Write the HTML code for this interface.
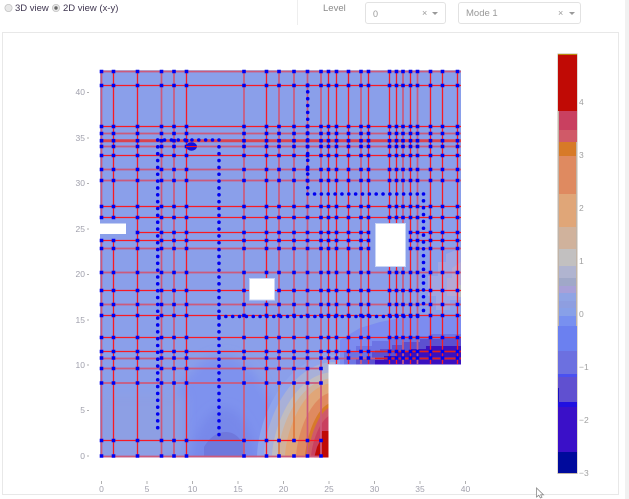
<!DOCTYPE html>
<html>
<head>
<meta charset="utf-8">
<style>
html,body{margin:0;padding:0;background:#fff;width:629px;height:499px;overflow:hidden}
body{position:relative;font-family:"Liberation Sans",sans-serif}
#w{position:absolute;left:0;top:0;width:629px;height:499px;overflow:hidden;filter:blur(0.3px)}
.a{position:absolute}
.sel{position:absolute;top:2px;height:20px;border:1px solid #e2e2e2;border-radius:3px;box-sizing:content-box;background:#fff}
svg{position:absolute;left:0;top:0;display:block}
</style>
</head>
<body>
<div id="w">
<svg width="629" height="499" viewBox="0 0 629 499" xmlns="http://www.w3.org/2000/svg" font-family="Liberation Sans, sans-serif">
<defs>
<clipPath id="dom"><path d="M100 70H461V364.5H328.5V457.5H100Z"/></clipPath>
<filter id="b" x="-30%" y="-30%" width="160%" height="160%"><feGaussianBlur stdDeviation="5"/></filter>
<path id="row" d="M101.5 0h0M113.5 0h0M137.5 0h0M161.5 0h0M174 0h0M186.5 0h0M244 0h0M266.5 0h0M279 0h0M294 0h0M307.5 0h0M321 0h0M328.5 0h0M336.5 0h0M348.5 0h0M361 0h0M368.5 0h0M389.5 0h0M396.5 0h0M403 0h0M410.5 0h0M417.5 0h0M430.5 0h0M442.5 0h0M457.5 0h0" fill="none" stroke="#0000f0" stroke-width="3.6" stroke-linecap="square"/>
<path id="row2" d="M101.5 0h0M113.5 0h0M137.5 0h0M161.5 0h0M174 0h0M186.5 0h0M244 0h0M266.5 0h0M279 0h0M294 0h0M307.5 0h0M321 0h0" fill="none" stroke="#0000f0" stroke-width="3.6" stroke-linecap="square"/>
<path id="row3" d="M137.5 0h0M161.5 0h0M174 0h0M186.5 0h0M244 0h0M266.5 0h0M279 0h0M294 0h0M307.5 0h0M321 0h0M328.5 0h0M336.5 0h0M348.5 0h0M361 0h0M368.5 0h0M410.5 0h0M417.5 0h0M430.5 0h0M442.5 0h0M457.5 0h0" fill="none" stroke="#0000f0" stroke-width="3.6" stroke-linecap="square"/>
</defs>

<!-- panel -->
<rect x="2.5" y="32.5" width="616" height="462" fill="#fff" stroke="#e8e8e8"/>
<rect x="625" y="0" width="4" height="499" fill="#f1f1f1"/>
<rect x="297" y="0" width="1" height="25" fill="#eeeeee"/>

<!-- heatmap -->
<g clip-path="url(#dom)">
<rect x="100" y="70" width="361" height="388" fill="#8a9fea"/>
<path d="M160 475C160 410 190 355 222 355C254 355 284 410 284 475Z" fill="#7e92ee" filter="url(#b)"/>
<rect x="100" y="395" width="85" height="63" fill="#8d9fe4" filter="url(#b)"/>
<path d="M190 475C190 440 205 408 224 408C243 408 258 440 258 475Z" fill="#7788ea" filter="url(#b)"/>
<path d="M204 458V447C208 440 215 432 226 432C236 432 241 440 245 447V458Z" fill="#6f78dc"/>
<!-- right bottom hot corner -->
<path d="M257 458C257 420 285 355 335 355V458Z" fill="#8fa4ec"/>
<path d="M264 458C264 422 290 362 335 362V458Z" fill="#a8b0d8"/>
<path d="M272 458C272 428 294 372 335 372V458Z" fill="#c0bcc0"/>
<path d="M278 458C278 430 298 378 335 378V458Z" fill="#d0b29c"/>
<path d="M285 458C285 434 302 383 335 383V458Z" fill="#e0a678"/>
<path d="M296 458C296 438 310 392 335 392V458Z" fill="#df8a60"/>
<path d="M305 458C305 442 316 402 335 402V458Z" fill="#d77a2a"/>
<path d="M308 458C308 444 318 406 335 406V458Z" fill="#cf5a68"/>
<path d="M311 458C311 446 320 414 335 414V458Z" fill="#c9405f"/>
<path d="M314 458L317 447L320 441L322 431H329V458Z" fill="#c00a05"/>
<!-- right band -->
<path d="M340 365V340L360 328L380 322L400 318L430 314H461V365Z" fill="#7c8cf0"/>
<path d="M344 365V352H356V346H372V341H388V338H402V336H430V334H461V365Z" fill="#6c74e4"/>
<path d="M356 365V358H372V352H380V349H392V345H402V342H420V339H440V337H461V365Z" fill="#5c50d0"/>
<path d="M375 365V360H384V356H396V352H410V349H426V346H461V365Z" fill="#3a10c0"/>
<!-- top-right pale patch -->
<path d="M461 248V300H450V310H436V296H428V276H438V262H446V254Z" fill="#a0a6e2"/>
<path d="M461 262V296H447V278H452V268Z" fill="#b4a8d4"/>
<rect x="459" y="285" width="2" height="12" fill="#b8bcc0"/>
<rect x="100" y="70" width="361" height="1" fill="#a8c4f0"/>
</g>

<!-- grid lines -->
<g clip-path="url(#dom)" fill="none" stroke-linecap="butt">
<path stroke="#f81a24" stroke-width="1.3" d="M113.5 70V217M113.5 240V457.5M137.5 70V457.5M186.5 70V457.5M266.5 70V457.5M328.5 70V364M336.5 70V364M348.5 70V364M368.5 70V364M389.5 70V364M396.5 70V364M410.5 70V364M430.5 70V364M442.5 70V364M457.5 70V364"/>
<path stroke="#cc5a7c" stroke-width="1.7" d="M101.5 70V217M101.5 240V457.5M161.5 70V457.5M174 70V457.5M244 70V457.5M279 70V383M294 70V383M307.5 70V457.5M321 70V457.5M361 70V364M403 70V364M417.5 70V364"/>
<path stroke="#e07030" stroke-width="1.4" d="M279 383V457.5M294 383V440"/>
<path stroke="#f81a24" stroke-width="1.3" d="M100 85.5H461M100 126.5H461M100 155.5H461M100 206.5H461M100 217.5H461M137 232.5H369M410 232.5H461M100 240.5H369M410 240.5H461M100 290.5H461M100 315.5H461M100 337.5H461M100 351.5H461M100 440.5H322"/>
<path stroke="#cc5a7c" stroke-width="1.7" d="M100 71.5H461M100 133.5H461M100 146.5H461M100 169.5H461M100 180.5H461M100 248.5H369M410 248.5H461M100 272.5H461M100 304.5H461M100 358.5H461M100 368.5H322M100 383H322M100 456.5H322"/>
<path stroke="#d94450" stroke-width="3" d="M100 140.7H461"/>
<path stroke="#e02020" stroke-width="1.6" d="M375 351.5H461M375 358.5H461"/>
</g>

<!-- node dots -->
<g>
<use href="#row" y="71.5"/><use href="#row" y="85.5"/><use href="#row" y="126.5"/><use href="#row" y="133.5"/><use href="#row" y="140.7"/><use href="#row" y="146.5"/><use href="#row" y="155.5"/><use href="#row" y="169.5"/><use href="#row" y="180.5"/><use href="#row" y="206.5"/><use href="#row" y="217.5"/>
<use href="#row3" y="232.5"/><use href="#row" y="240.5"/><use href="#row" y="248.5"/><use href="#row" y="272.5"/><use href="#row" y="290.5"/><use href="#row" y="304.5"/><use href="#row" y="315.5"/><use href="#row" y="337.5"/><use href="#row" y="351.5"/><use href="#row" y="358"/>
<use href="#row2" y="368.5"/><use href="#row2" y="383"/><use href="#row2" y="440.5"/><use href="#row2" y="456"/>
</g>

<!-- dotted paths -->
<g fill="none" stroke="#0000f0" stroke-width="3.6" stroke-linecap="round" stroke-dasharray="0 6.85">
<path d="M157.7 140V434"/>
<path d="M157.7 140H219"/>
<path d="M219 140V440"/>
<path d="M219 316.5H424"/>
<path d="M423.5 194V316"/>
<path d="M307.7 194H424"/>
<path d="M307.7 85V194"/>
</g>
<ellipse cx="191.5" cy="146.5" rx="5.5" ry="4.2" fill="#1010e0"/>
<rect x="186" y="146" width="11" height="1.1" fill="#f01020"/>

<!-- holes -->
<rect x="100" y="223.5" width="26" height="10.5" fill="#fff"/>
<rect x="249.5" y="278.5" width="25" height="21.5" fill="#fff" stroke="#c8d4f4" stroke-width="1"/>
<rect x="375.5" y="223.5" width="30" height="43" fill="#fff" stroke="#c8d4f4" stroke-width="1"/>

<!-- y axis -->
<g fill="#a0a0ac" font-size="8.5" text-anchor="end">
<text x="85" y="95">40</text><text x="85" y="141">35</text><text x="85" y="186">30</text><text x="85" y="232">25</text><text x="85" y="277">20</text><text x="85" y="323">15</text><text x="85" y="368">10</text><text x="85" y="413">5</text><text x="85" y="459">0</text>
</g>
<path stroke="#b0b0b0" stroke-width="1" fill="none" d="M87 92.5h2M87 138h2M87 183.5h2M87 229h2M87 274.5h2M87 320h2M87 365h2M87 410.5h2M87 456h2"/>
<!-- x axis -->
<g fill="#a0a0ac" font-size="8.5" text-anchor="middle">
<text x="101.5" y="492">0</text><text x="147" y="492">5</text><text x="192.5" y="492">10</text><text x="238" y="492">15</text><text x="283.5" y="492">20</text><text x="329" y="492">25</text><text x="374.5" y="492">30</text><text x="420" y="492">35</text><text x="465.5" y="492">40</text>
</g>
<path stroke="#b0b0b0" stroke-width="1" fill="none" d="M101.5 481v3M147 481v3M192.5 481v3M238 481v3M283.5 481v3M329 481v3M374.5 481v3M420 481v3M465.5 481v3"/>

<!-- colorbar -->
<rect x="557.5" y="53.5" width="20" height="420.5" fill="#c0b4a8"/>
<g>
<rect x="558" y="54" width="19" height="2" fill="#b8860b"/>
<rect x="558" y="55" width="19" height="56" fill="#c00a05"/>
<rect x="559" y="111" width="18" height="19" fill="#c94060"/>
<rect x="559" y="130" width="18" height="12" fill="#d05a68"/>
<rect x="559" y="142" width="17" height="14" fill="#d77a28"/>
<rect x="559" y="156" width="17" height="38" fill="#df8a60"/>
<rect x="559" y="194" width="17" height="33" fill="#e0a678"/>
<rect x="559" y="227" width="17" height="22" fill="#d0b29c"/>
<rect x="559" y="249" width="17" height="17" fill="#c2c0c0"/>
<rect x="559" y="266" width="17" height="12" fill="#b0b4d0"/>
<rect x="559" y="278" width="17" height="8" fill="#a0a8c8"/>
<rect x="559" y="286" width="17" height="7" fill="#a8a0d8"/>
<rect x="559" y="293" width="17" height="8" fill="#90a4e4"/>
<rect x="559" y="301" width="17" height="7" fill="#8e9ee0"/>
<rect x="559" y="308" width="17" height="8" fill="#88a0e8"/>
<rect x="559" y="316" width="17" height="10" fill="#7890f0"/>
<rect x="558" y="326" width="19" height="25" fill="#6b80f0"/>
<rect x="558" y="351" width="19" height="23" fill="#6c70e0"/>
<rect x="558" y="374" width="19" height="3" fill="#4a50f0"/>
<rect x="558" y="377" width="19" height="25" fill="#6050d0"/>
<rect x="558" y="388" width="1" height="14" fill="#1a10c0"/>
<rect x="558" y="402" width="19" height="5" fill="#2010e0"/>
<rect x="558" y="407" width="19" height="45" fill="#3a10c8"/>
<rect x="558" y="452" width="19" height="21" fill="#000a9c"/>
</g>
<g fill="#a0a0a0" font-size="8.5">
<text x="579" y="105">4</text><text x="579" y="158">3</text><text x="579" y="211">2</text><text x="579" y="264">1</text><text x="579" y="317">0</text><text x="579" y="370">−1</text><text x="579" y="423">−2</text><text x="579" y="476">−3</text>
</g>

<!-- cursor -->
<path d="M536.5 488V497L538.8 495.2L540.4 498L542 497.2L540.6 494.8H543.5Z" fill="#fff" stroke="#8a8a8a" stroke-width="0.8"/>

<!-- radios -->
<circle cx="8.5" cy="8" r="3.6" fill="#e8e8e8" stroke="#c4c4c4" stroke-width="0.8"/>
<circle cx="56" cy="8" r="3.6" fill="#e8e8e8" stroke="#c4c4c4" stroke-width="0.8"/>
<circle cx="56" cy="8" r="1.7" fill="#666"/>
</svg>

<div class="a" style="left:15px;top:3px;font-size:9.5px;line-height:12px;color:#3f3650;white-space:nowrap">3D view</div>
<div class="a" style="left:63px;top:3px;font-size:9.5px;line-height:12px;color:#3f3650;white-space:nowrap">2D view (x-y)</div>
<div class="a" style="left:323px;top:3px;font-size:9.5px;line-height:12px;color:#8a8a8a;white-space:nowrap">Level</div>

<div class="sel" style="left:365px;width:79px">
<span class="a" style="left:7px;top:5px;font-size:9px;line-height:12px;color:#999">0</span>
<span class="a" style="left:56px;top:5px;font-size:9px;line-height:11px;color:#999">×</span>
<span class="a" style="left:66px;top:9px;width:0;height:0;border-left:3px solid transparent;border-right:3px solid transparent;border-top:3px solid #999"></span>
</div>
<div class="sel" style="left:458px;width:121px">
<span class="a" style="left:7px;top:5px;font-size:9.5px;line-height:12px;color:#999;white-space:nowrap">Mode 1</span>
<span class="a" style="left:99px;top:5px;font-size:9px;line-height:11px;color:#999">×</span>
<span class="a" style="left:110px;top:9px;width:0;height:0;border-left:3px solid transparent;border-right:3px solid transparent;border-top:3px solid #999"></span>
</div>
</div>
</body>
</html>
